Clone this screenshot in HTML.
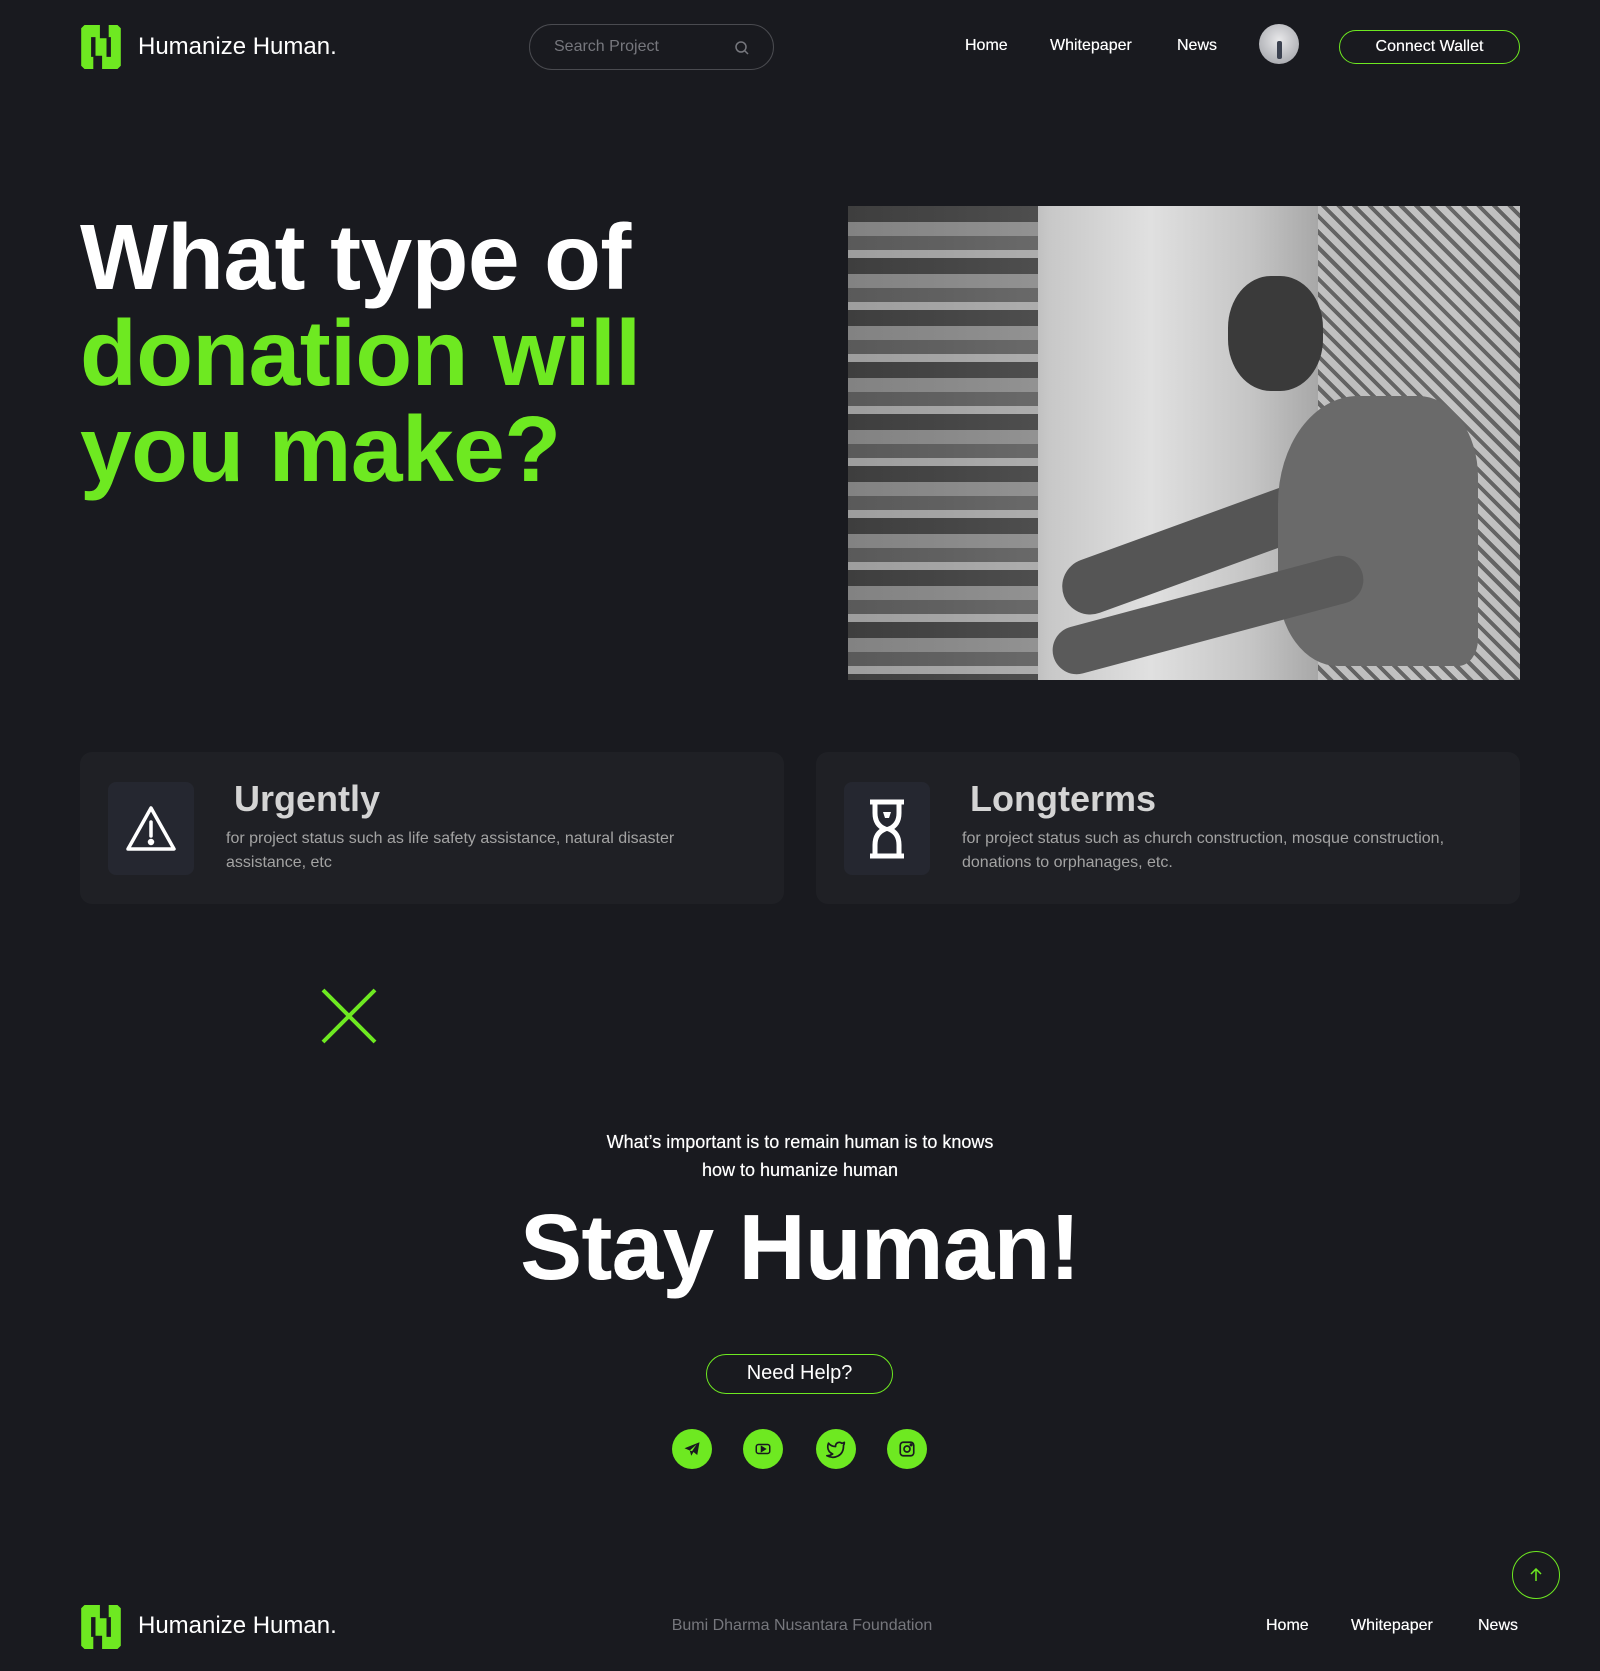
<!DOCTYPE html>
<html><head><meta charset="utf-8"><style>
*{margin:0;padding:0;box-sizing:border-box}
body{width:1600px;height:1671px;background:#191a1f;font-family:"Liberation Sans",Arial,sans-serif;color:#fff;position:relative;overflow:hidden}
.a{position:absolute}
.logo{width:42px;height:44px}
.brand{font-size:24px;white-space:nowrap}
.nav a{color:#fff;text-decoration:none;font-size:16px;position:absolute;white-space:nowrap;text-shadow:0 0 0.4px #fff}
.green{color:#6ee921}
.card{background:#1f2025;border-radius:12px;height:152px;width:704px;top:752px}
.ib{background:#252730;border-radius:8px;width:86px;height:93px;left:28px;top:30px;display:flex;align-items:center;justify-content:center}
.ct{font-size:36px;font-weight:bold;color:#d4d4d4;left:154px;top:26px}
.cd{font-size:16px;color:#a3a3a3;line-height:24px;left:146px;top:75px;width:480px}
.soc{width:40px;height:40px;border-radius:50%;background:#6ee921;top:1429px;display:flex;align-items:center;justify-content:center}
</style></head><body>
<svg class="a logo" style="left:80px;top:25px" viewBox="0 0 36 40"><path d="M3 0H33L36 3V37L33 40H3L0 37V3Z" fill="#6ee921"/><path d="M17 0H25V12H17Z M11 28H19V40H11Z M9 11H13V29H9Z M23 11H27V29H23Z" fill="#191a1f"/></svg>
<div class="a brand" style="left:138px;top:33px">Humanize Human.</div>
<div class="a" style="left:529px;top:24px;width:245px;height:46px;border:1px solid #4a4b50;border-radius:23px"><span class="a" style="left:24px;top:13px;color:#76777d;font-size:16px">Search Project</span>
<svg class="a" style="left:204px;top:15px" width="16" height="16" viewBox="0 0 16 16" fill="none" stroke="#76777d" stroke-width="1.5"><circle cx="7" cy="7" r="5"/><path d="M11 11l3 3"/></svg></div>
<div class="nav"><a style="left:965px;top:37px">Home</a><a style="left:1050px;top:37px">Whitepaper</a><a style="left:1177px;top:37px">News</a></div>
<div class="a" style="left:1259px;top:24px;width:40px;height:40px;border-radius:50%;background:radial-gradient(circle at 50% 40%,#e8e8ea,#9a9ca2);overflow:hidden"><div class="a" style="left:18px;top:17px;width:5px;height:18px;background:#3b4150;border-radius:2px"></div></div>
<div class="a" style="left:1339px;top:30px;width:181px;height:34px;border:1.5px solid #6ee921;border-radius:17px;text-align:center;line-height:31px;font-size:16px;text-shadow:0 0 0.4px #fff">Connect Wallet</div>

<div class="a" style="left:80px;top:209px;font-size:93px;font-weight:bold;line-height:96px;letter-spacing:-0.6px;white-space:nowrap">What type of<br><span class="green">donation will<br>you make?</span></div>

<div class="a" style="left:848px;top:206px;width:672px;height:474px;overflow:hidden;background:linear-gradient(90deg,#555 0%,#888 15%,#c8c8c8 30%,#e0e0e0 45%,#c5c5c5 60%,#999 75%,#b5b5b5 90%,#999 100%)">
<div class="a" style="left:0;top:0;width:190px;height:474px;background:repeating-linear-gradient(180deg,#3a3a3a 0 16px,#8a8a8a 16px 30px,#5a5a5a 30px 44px,#aaa 44px 52px);opacity:.85"></div>
<div class="a" style="left:470px;top:0;width:202px;height:474px;background:repeating-linear-gradient(45deg,#c8c8c8 0 7px,#555 7px 11px),#888;opacity:.8"></div>
<div class="a" style="left:380px;top:70px;width:95px;height:115px;border-radius:45%;background:#3a3a3a"></div>
<div class="a" style="left:190px;top:215px;width:430px;height:56px;background:#555;transform:rotate(-20deg);transform-origin:right center;border-radius:28px"></div>
<div class="a" style="left:430px;top:190px;width:200px;height:270px;background:#6a6a6a;border-radius:40% 30% 10% 30%"></div>
<div class="a" style="left:200px;top:385px;width:320px;height:48px;background:#5a5a5a;transform:rotate(-15deg);border-radius:24px"></div>
</div>

<div class="a card" style="left:80px"><div class="a ib"><svg width="52" height="48" viewBox="0 0 52 48" fill="none" stroke="#fff" stroke-width="3.5" stroke-linejoin="round"><path d="M26 3L49 44H3Z"/><path d="M26 17v14" stroke-linecap="round"/><circle cx="26" cy="37" r="1.5" fill="#fff"/></svg></div>
<div class="a ct">Urgently</div><div class="a cd">for project status such as life safety assistance, natural disaster assistance, etc</div></div>
<div class="a card" style="left:816px"><div class="a ib"><svg width="38" height="60" viewBox="0 0 38 60" fill="none" stroke="#fff" stroke-width="5"><path d="M2 3H36M2 57H36"/><path d="M7 3V14Q7 26 17 30Q7 34 7 46V57M31 3V14Q31 26 21 30Q31 34 31 46V57"/><path d="M15 13h8l-2 6h-4z" fill="#fff" stroke="none"/></svg></div>
<div class="a ct">Longterms</div><div class="a cd" style="width:500px">for project status such as church construction, mosque construction, donations to orphanages, etc.</div></div>

<svg class="a" style="left:321px;top:988px" width="56" height="56" viewBox="0 0 56 56" stroke="#6ee921" stroke-width="4"><path d="M2 2L54 54M54 2L2 54"/></svg>

<div class="a" style="left:0;width:1600px;top:1128px;text-align:center;font-size:18px;line-height:28px;text-shadow:0 0 0.5px #fff">What’s important is to remain human is to knows<br>how to humanize human</div>
<div class="a" style="left:0;width:1600px;top:1192px;text-align:center;font-size:93px;font-weight:bold;line-height:110px;letter-spacing:-0.8px">Stay Human!</div>
<div class="a" style="left:706px;top:1354px;width:187px;height:40px;border:1.5px solid #6ee921;border-radius:20px;text-align:center;line-height:37px;font-size:20px">Need Help?</div>

<div class="a soc" style="left:672px"><svg width="18" height="18" viewBox="0 0 24 24"><path d="M22 3L2 11l7 3 2 7 3-5 5 4z M9 14l9-8-6 9" fill="#191a1f"/></svg></div>
<div class="a soc" style="left:743px"><svg width="18" height="18" viewBox="0 0 24 24" fill="none" stroke="#191a1f" stroke-width="2"><rect x="3" y="6" width="18" height="12" rx="3"/><path d="M10 9v6l5-3z" fill="#191a1f"/></svg></div>
<div class="a soc" style="left:816px"><svg width="20" height="20" viewBox="0 0 24 24" fill="none" stroke="#191a1f" stroke-width="2" stroke-linejoin="round"><path d="M22 4s-2 1-3 1.2A4.5 4.5 0 0 0 11.5 8v1A10.7 10.7 0 0 1 3 5s-4 9 5 13a11.6 11.6 0 0 1-7 2c9 5 20 0 20-11.5 0-.3 0-.6-.1-.8C21.900 6.700 22 4 22 4z"/></svg></div>
<div class="a soc" style="left:887px"><svg width="18" height="18" viewBox="0 0 24 24" fill="none" stroke="#191a1f" stroke-width="2.2"><rect x="3" y="3" width="18" height="18" rx="4"/><circle cx="12" cy="12" r="4"/><circle cx="17.5" cy="6.5" r="1" fill="#191a1f"/></svg></div>

<div class="a" style="left:1512px;top:1551px;width:48px;height:48px;border:1.5px solid #6ee921;border-radius:50%;display:flex;align-items:center;justify-content:center"><svg width="14" height="14" viewBox="0 0 14 14" fill="none" stroke="#6ee921" stroke-width="1.5"><path d="M7 13V1M2 6l5-5 5 5"/></svg></div>

<svg class="a logo" style="left:80px;top:1605px" viewBox="0 0 36 40"><path d="M3 0H33L36 3V37L33 40H3L0 37V3Z" fill="#6ee921"/><path d="M17 0H25V12H17Z M11 28H19V40H11Z M9 11H13V29H9Z M23 11H27V29H23Z" fill="#191a1f"/></svg>
<div class="a brand" style="left:138px;top:1612px">Humanize Human.</div>
<div class="a" style="left:0;width:1604px;top:1617px;text-align:center;color:#76777d;font-size:16px">Bumi Dharma Nusantara Foundation</div>
<div class="nav"><a style="left:1266px;top:1617px">Home</a><a style="left:1351px;top:1617px">Whitepaper</a><a style="left:1478px;top:1617px">News</a></div>
</body></html>
